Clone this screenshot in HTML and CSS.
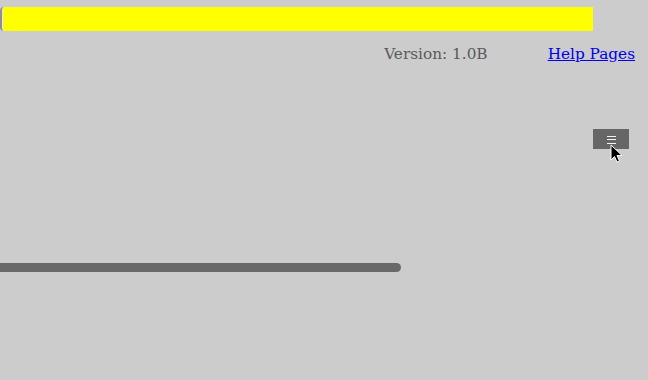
FILE: index.html
```html
<!DOCTYPE html>
<html>
<head>
<meta charset="utf-8">
<link rel="stylesheet" href="styles.css">
</head>
<body>
<div class="page">
  <div class="top">
    <div class="field"></div>
  </div>
  <div class="meta">
    <span class="version">Version: 1.0B</span>
    <a class="help" href="#">Help Pages</a>
  </div>
  <div class="menu-row">
    <button class="menu-btn" type="button" aria-label="Menu">
      <svg width="36" height="20" viewBox="0 0 36 20">
        <rect x="14" y="7" width="9" height="1" fill="#f2f2f2"/>
        <rect x="14" y="10" width="9" height="1" fill="#f2f2f2"/>
        <rect x="14" y="14" width="9" height="1" fill="#f2f2f2"/>
      </svg>
      <svg class="cursor" width="14" height="20" viewBox="0 0 14 20">
        <path d="M1 1 L1 16 L4.5 12.5 L7 18 L9.5 17 L7 11.5 L12 11.5 Z" fill="#000" stroke="#fff" stroke-width="1" stroke-linejoin="round"/>
      </svg>
    </button>
  </div>
  <div class="progress"></div>
</div>
</body>
</html>
```

FILE: styles.css
```css
html, body {
  margin: 0;
  padding: 0;
  background: #cccccc;
}
body {
  width: 648px;
  height: 380px;
  overflow: hidden;
  font-family: "DejaVu Serif", serif;
}
.page {
  display: flex;
  flex-direction: column;
}
.top {
  padding-top: 7px;
}
.field {
  width: 593px;
  height: 24px;
  background: #ffff00;
  border-left: 2px solid #8e8e9a;
  border-radius: 4px 0 0 4px;
  box-sizing: border-box;
  box-shadow: inset 1px 0 0 #e8e8e8;
}
.meta {
  display: flex;
  justify-content: flex-end;
  align-items: baseline;
  margin-top: 13px;
  padding-right: 13px;
  font-size: 15.3px;
  line-height: 20px;
}
.version {
  color: #5a5a5a;
  margin-right: 60px;
}
.help {
  color: #0000ee;
  text-decoration: underline;
}
.menu-row {
  display: flex;
  justify-content: flex-end;
  padding-right: 19px;
  margin-top: 65px;
}
.menu-btn {
  position: relative;
  width: 36px;
  height: 20px;
  padding: 0;
  margin: 0;
  border: none;
  background: #666666;
  display: block;
}
.menu-btn svg {
  display: block;
}
.cursor {
  position: absolute;
  left: 17px;
  top: 15px;
}
.progress {
  margin-top: 114px;
  width: 401px;
  height: 9px;
  background: #696969;
  border-radius: 0 5px 5px 0;
}
```
